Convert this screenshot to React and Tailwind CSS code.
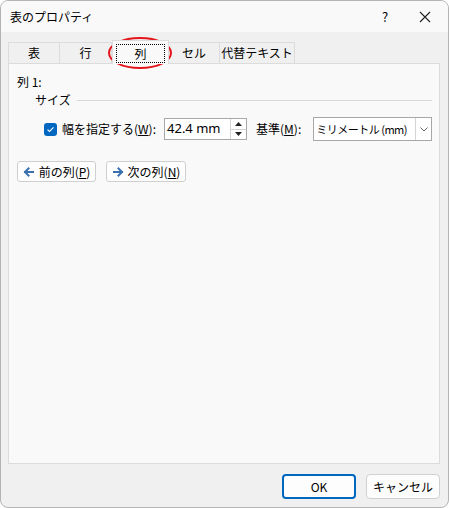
import React from 'react';

const FONT = { fontFamily: '"Noto Sans CJK JP", "Noto Sans", sans-serif' };

const TABS = [
  { label: '表', w: 52 },
  { label: '行', w: 53 },
  { label: '列', w: 57, active: true },
  { label: 'セル', w: 52 },
  { label: '代替テキスト', w: 76 },
];

function Arrow({ dir }) {
  // 前/次 ボタンの青い矢印
  const d = dir === 'left' ? 'M10 6H2M5.5 2.5 2 6l3.5 3.5' : 'M2 6h8M6.5 2.5 10 6l-3.5 3.5';
  return (
    <svg width="12" height="12" viewBox="0 0 12 12" fill="none">
      <path d={d} stroke="#3b70b0" strokeWidth="2" strokeLinecap="square" />
    </svg>
  );
}

function Tab({ label, w, active }) {
  if (active) {
    return (
      <div
        className="relative z-10 -mb-px h-[24px] bg-[#f9f9f9] border border-b-0 border-[#dcdcdc] flex items-center justify-center px-[3px] pt-[2px]"
        style={{ width: w }}
      >
        <div className="w-full h-[19px] border border-dotted border-black flex items-center justify-center text-[12px] text-black">
          {label}
        </div>
      </div>
    );
  }
  return (
    <div
      className="h-[21px] border border-b-0 border-[#dcdcdc] -ml-px first:ml-0 flex items-center justify-center text-[12px] text-black"
      style={{ width: w }}
    >
      {label}
    </div>
  );
}

function Btn({ children, primary }) {
  return (
    <button
      className={`h-[25px] w-[74px] rounded-[4px] bg-[#fdfdfd] text-[12px] text-black flex items-center justify-center ${
        primary ? 'border-2 border-[#0067c0]' : 'border border-[#d0d0d0]'
      }`}
    >
      {children}
    </button>
  );
}

export default function App() {
  return (
    <div className="w-[449px] h-[508px] relative bg-[#f0f0f0] border border-[#b4b4b4] rounded-[8px] overflow-hidden select-none" style={FONT}>
      {/* タイトルバー */}
      <div className="h-[31px] bg-[#f9f9f9] flex items-center pl-[9px] text-[12px] text-black">
        <span className="flex-1">表のプロパティ</span>
        <span className="w-[20px] text-center text-[13px] mr-[24px]">?</span>
        <svg width="12" height="12" viewBox="0 0 12 12" className="mr-[17px]">
          <path d="M1 1l10 10M11 1 1 11" stroke="#222" strokeWidth="1.1" />
        </svg>
      </div>

      {/* タブ */}
      <div className="flex items-end ml-[7px] mt-[8px] h-[23px]">
        {TABS.map((t) => (
          <Tab key={t.label} {...t} />
        ))}
      </div>

      {/* パネル */}
      <div className="ml-[7px] w-[432px] h-[401px] bg-[#f9f9f9] border border-[#dcdcdc] text-[12px] text-black">
        <div className="pl-[8px] pt-[10px] leading-[16px]">列 1:</div>
        <div className="flex items-center pl-[26px] pr-[7px] mt-[2px]">
          <span className="leading-[16px]">サイズ</span>
          <div className="flex-1 h-px bg-[#d8d8d8] ml-[6px]" />
        </div>

        <div className="flex items-center mt-[9px] h-[24px]">
          <div className="ml-[35px] w-[13px] h-[13px] rounded-[3px] bg-[#0067c0] flex items-center justify-center">
            <svg width="9" height="9" viewBox="0 0 9 9" fill="none">
              <path d="M1.5 4.7 3.5 6.5 7.5 2.3" stroke="#fff" strokeWidth="1.1" />
            </svg>
          </div>
          <span className="ml-[5px]">
            幅を指定する(<span className="underline">W</span>):
          </span>
          <div className="ml-[8px] w-[83px] h-[22px] bg-white border border-[#a8a8a8] flex items-center">
            <span className="flex-1 pl-[2px] text-[13px]" style={{ fontFamily: '"Noto Sans", sans-serif' }}>42.4 mm</span>
            <div className="w-[16px] h-full flex flex-col border-l border-[#d4d4d4]">
              <div className="flex-1 flex items-center justify-center border-b border-[#d4d4d4]">
                <svg width="7" height="4" viewBox="0 0 7 4"><path d="M0 4 3.5 0 7 4z" fill="#222" /></svg>
              </div>
              <div className="flex-1 flex items-center justify-center">
                <svg width="7" height="4" viewBox="0 0 7 4"><path d="M0 0h7L3.5 4z" fill="#222" /></svg>
              </div>
            </div>
          </div>
          <span className="ml-[9px]">
            基準(<span className="underline">M</span>):
          </span>
          <div className="ml-[12px] w-[119px] h-[24px] bg-white border border-[#a8a8a8] flex items-center">
            <span className="flex-1 pl-[2px] text-[11px] tracking-[-0.5px] whitespace-pre overflow-hidden">ミリメートル (mm)</span>
            <div className="w-[16px] h-[22px] border-l border-[#d4d4d4] flex items-center justify-center">
              <svg width="8" height="5" viewBox="0 0 8 5" fill="none"><path d="M0.5 0.5 4 4 7.5 0.5" stroke="#555" strokeWidth="0.9" /></svg>
            </div>
          </div>
        </div>

        <div className="flex items-center gap-[10px] ml-[8px] mt-[20px]">
          <button className="h-[21px] w-[79px] bg-[#fdfdfd] border border-[#cfcfcf] rounded-[3px] flex items-center justify-center gap-[4px] text-[12px]">
            <Arrow dir="left" />
            <span>前の列(<span className="underline">P</span>)</span>
          </button>
          <button className="h-[21px] w-[80px] bg-[#fdfdfd] border border-[#cfcfcf] rounded-[3px] flex items-center justify-center gap-[4px] text-[12px]">
            <Arrow dir="right" />
            <span>次の列(<span className="underline">N</span>)</span>
          </button>
        </div>
      </div>

      {/* 下部ボタン */}
      <div className="flex justify-end gap-[10px] pr-[8px] mt-[10px]">
        <Btn primary>OK</Btn>
        <Btn>キャンセル</Btn>
      </div>

      {/* 赤い丸の注釈 */}
      <svg className="absolute left-[106px] top-[35px] pointer-events-none" width="66" height="34" viewBox="0 0 66 34">
        <ellipse cx="33" cy="17" rx="31" ry="15" fill="none" stroke="#e4141b" strokeWidth="2" />
      </svg>
    </div>
  );
}
